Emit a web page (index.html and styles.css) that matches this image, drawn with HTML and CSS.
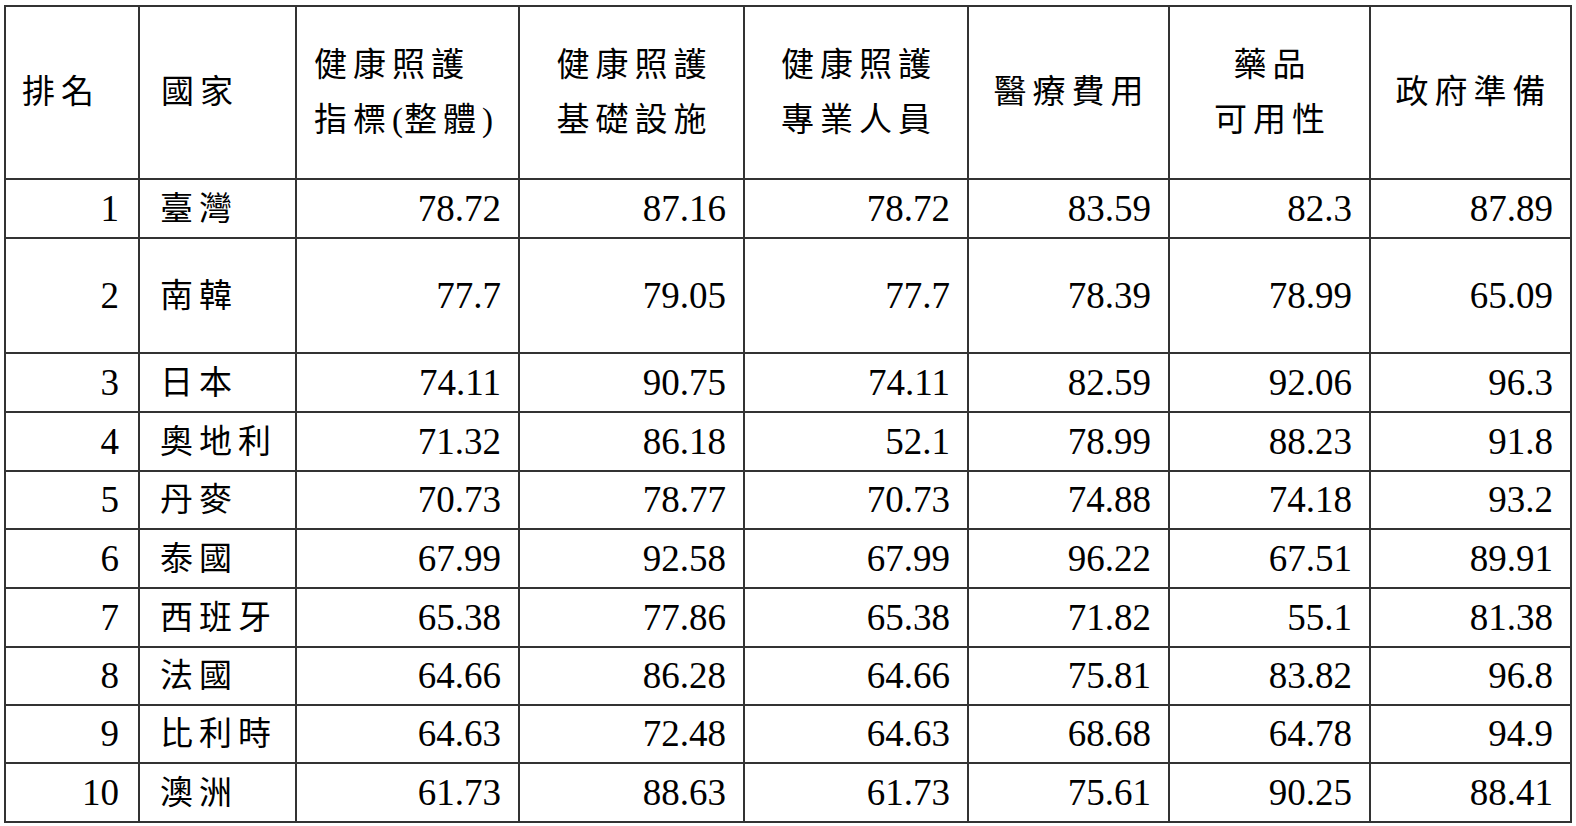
FILE: index.html
```html
<!DOCTYPE html>
<html lang="zh-Hant">
<head>
<meta charset="utf-8">
<title>健康照護指標</title>
<link rel="stylesheet" href="styles.css">
</head>
<body>
<table class="rank-table">
  <colgroup>
    <col class="c-rank">
    <col class="c-country">
    <col class="c-wide1">
    <col class="c-wide2">
    <col class="c-wide3">
    <col class="c-narrow">
    <col class="c-narrow">
    <col class="c-narrow">
  </colgroup>
  <thead>
    <tr class="head-row">
      <th class="h-left cjk">排名</th>
      <th class="h-left h-country cjk">國家</th>
      <th class="h-left h-index cjk">健康照護<br>指標<span class="paren">(</span>整體<span class="paren">)</span></th>
      <th class="h-center cjk">健康照護<br>基礎設施</th>
      <th class="h-center cjk">健康照護<br>專業人員</th>
      <th class="h-center cjk">醫療費用</th>
      <th class="h-center cjk">藥品<br>可用性</th>
      <th class="h-center cjk">政府準備</th>
    </tr>
  </thead>
  <tbody>
    <tr class="r-59"><td class="num rank">1</td><td class="name cjk">臺灣</td><td class="num">78.72</td><td class="num">87.16</td><td class="num">78.72</td><td class="num">83.59</td><td class="num">82.3</td><td class="num">87.89</td></tr>
    <tr class="r-tall"><td class="num rank">2</td><td class="name cjk">南韓</td><td class="num">77.7</td><td class="num">79.05</td><td class="num">77.7</td><td class="num">78.39</td><td class="num">78.99</td><td class="num">65.09</td></tr>
    <tr class="r-59"><td class="num rank">3</td><td class="name cjk">日本</td><td class="num">74.11</td><td class="num">90.75</td><td class="num">74.11</td><td class="num">82.59</td><td class="num">92.06</td><td class="num">96.3</td></tr>
    <tr class="r-59"><td class="num rank">4</td><td class="name cjk">奧地利</td><td class="num">71.32</td><td class="num">86.18</td><td class="num">52.1</td><td class="num">78.99</td><td class="num">88.23</td><td class="num">91.8</td></tr>
    <tr class="r-58"><td class="num rank">5</td><td class="name cjk">丹麥</td><td class="num">70.73</td><td class="num">78.77</td><td class="num">70.73</td><td class="num">74.88</td><td class="num">74.18</td><td class="num">93.2</td></tr>
    <tr class="r-59"><td class="num rank">6</td><td class="name cjk">泰國</td><td class="num">67.99</td><td class="num">92.58</td><td class="num">67.99</td><td class="num">96.22</td><td class="num">67.51</td><td class="num">89.91</td></tr>
    <tr class="r-59"><td class="num rank">7</td><td class="name cjk">西班牙</td><td class="num">65.38</td><td class="num">77.86</td><td class="num">65.38</td><td class="num">71.82</td><td class="num">55.1</td><td class="num">81.38</td></tr>
    <tr class="r-58"><td class="num rank">8</td><td class="name cjk">法國</td><td class="num">64.66</td><td class="num">86.28</td><td class="num">64.66</td><td class="num">75.81</td><td class="num">83.82</td><td class="num">96.8</td></tr>
    <tr class="r-58"><td class="num rank">9</td><td class="name cjk">比利時</td><td class="num">64.63</td><td class="num">72.48</td><td class="num">64.63</td><td class="num">68.68</td><td class="num">64.78</td><td class="num">94.9</td></tr>
    <tr class="r-59"><td class="num rank">10</td><td class="name cjk">澳洲</td><td class="num">61.73</td><td class="num">88.63</td><td class="num">61.73</td><td class="num">75.61</td><td class="num">90.25</td><td class="num">88.41</td></tr>
  </tbody>
</table>
</body>
</html>
```

FILE: styles.css
```css
html, body {
  margin: 0;
  padding: 0;
  background: #ffffff;
}

body {
  padding: 5px 0 0 4px;
  font-family: "Liberation Serif", "Noto Sans CJK TC", serif;
  color: #000000;
}

.rank-table {
  border-collapse: collapse;
  table-layout: fixed;
  width: 1568px;
}

.c-rank { width: 134px; }
.c-country { width: 157px; }
.c-wide1 { width: 223px; }
.c-wide2 { width: 225px; }
.c-wide3 { width: 224px; }
.c-narrow { width: 201px; }

.rank-table th,
.rank-table td {
  border: 2px solid #333333;
  padding: 0;
  vertical-align: middle;
  box-sizing: border-box;
}

.rank-table .cjk {
  font-family: "Liberation Serif", "Noto Sans CJK TC", serif;
  font-size: 33px;
  font-weight: 400;
  letter-spacing: 6px;
}

.rank-table .paren {
  letter-spacing: 1px;
}

.head-row {
  height: 173px;
}

.rank-table th {
  line-height: 55px;
}

.rank-table .h-left {
  text-align: left;
  padding-left: 16px;
}

.rank-table .h-country {
  padding-left: 21px;
}

.rank-table .h-index {
  padding-left: 17px;
}

.rank-table .h-center {
  text-align: center;
  padding-left: 6px;
}

.r-59 { height: 59px; }
.r-58 { height: 58px; }
.r-tall { height: 115px; }

.rank-table .num {
  font-size: 37px;
  text-align: right;
  padding-right: 17px;
  line-height: 40px;
}

.rank-table .rank {
  padding-right: 19px;
}

.rank-table .name {
  text-align: left;
  padding-left: 20px;
  line-height: 40px;
}
```
